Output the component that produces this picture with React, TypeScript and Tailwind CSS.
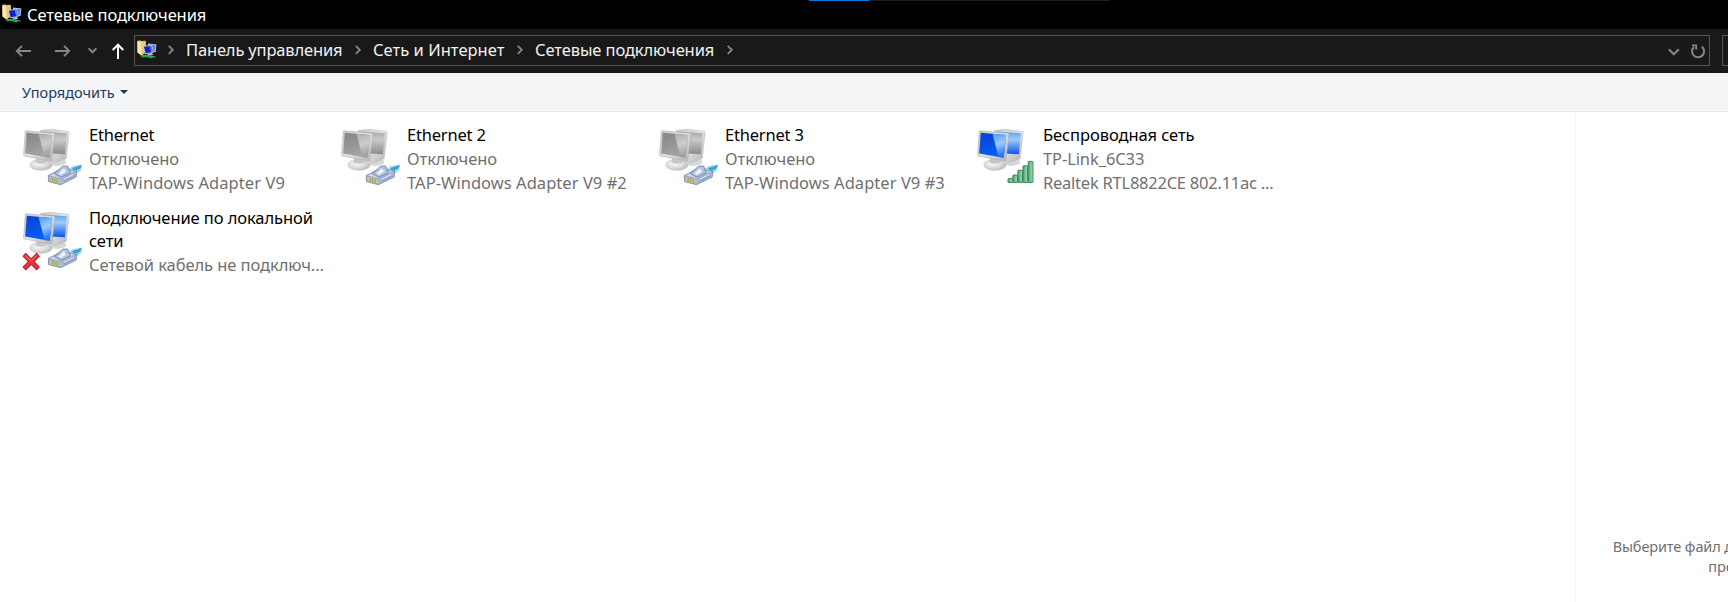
import React from 'react';

type IconKind = 'disabled' | 'wifi' | 'unplugged';

function MonitorsIcon({ kind }: { kind: IconKind }) {
  const off = kind === 'disabled';
  const id = (n: string) => `${n}-${kind}`;
  const ref = (n: string) => `url(#${id(n)})`;
  return (
    <svg viewBox="0 0 75 75" className="h-[75px] w-[75px] shrink-0">
      <defs>
        <linearGradient id={id('front')} x1="0" y1="0" x2="0.3" y2="1">
          <stop offset="0" stopColor={off ? '#858585' : '#0a3fd0'} />
          <stop offset="1" stopColor={off ? '#a3a3a3' : '#0560f5'} />
        </linearGradient>
        <linearGradient id={id('glare')} x1="0" y1="0" x2="0.2" y2="1">
          <stop offset="0" stopColor={off ? '#aeaeae' : '#4f9cf4'} />
          <stop offset="0.5" stopColor={off ? '#cdcdcd' : '#9ccafb'} />
          <stop offset="1" stopColor={off ? '#9f9f9f' : '#1f74f8'} />
        </linearGradient>
        <linearGradient id={id('back')} x1="0" y1="0" x2="0" y2="1">
          <stop offset="0" stopColor={off ? '#a8a8a8' : '#5aa2f0'} />
          <stop offset="0.35" stopColor={off ? '#cacaca' : '#9dccfa'} />
          <stop offset="1" stopColor={off ? '#8a8a8a' : '#0a55ea'} />
        </linearGradient>
        <linearGradient id={id('frame')} x1="0" y1="0" x2="1" y2="1">
          <stop offset="0" stopColor="#c6c8c8" />
          <stop offset="0.5" stopColor="#e4e4e4" />
          <stop offset="1" stopColor="#b0b0b0" />
        </linearGradient>
        <radialGradient id={id('base')} cx="0.4" cy="0.4" r="0.65">
          <stop offset="0" stopColor="#fafafa" />
          <stop offset="0.6" stopColor="#d9d9d9" />
          <stop offset="1" stopColor="#b8b8b8" />
        </radialGradient>
        <linearGradient id={id('bar')} x1="0" y1="0" x2="1" y2="0">
          <stop offset="0" stopColor="#4fa577" />
          <stop offset="1" stopColor="#a5dcb6" />
        </linearGradient>
      </defs>

      <path d="M36 40 L48 38 Q54 42 49 44.5 Q43 47 37 45 Z" fill="#d8d8d8" />
      <path d="M25 10.6 L36 9.3 L53.3 11.4 Q54.2 11.6 54.1 12.4 L51.2 38.6 L40 43 L36 41 Z" fill={ref('frame')} stroke="#bdbdbd" strokeWidth="0.6" />
      <path d="M28 11.6 L51.9 13.2 L49.9 34.2 L36 33.4 Z" fill={ref('back')} />

      <ellipse cx="26" cy="44.8" rx="11.4" ry="5.6" fill={ref('base')} stroke="#c4c4c4" strokeWidth="0.4" />
      <path d="M21 38 L31 39.5 L31.5 42.6 Q26 45 20.5 42.4 Z" fill="#c6c6c6" />
      <path d="M11.4 10.8 L38.8 13.2 Q40 13.4 39.9 14.6 L36.9 40 Q36.7 41.3 35.5 41 L9.3 35.9 Q8.4 35.6 8.6 34.6 L10.3 11.6 Q10.5 10.7 11.4 10.8 Z" fill={ref('frame')} stroke="#adb0b0" strokeWidth="0.6" />
      <path d="M11.8 12.7 L37.4 15 L34.6 37.7 L10.1 33.6 Z" fill={ref('front')} />
      <path d="M23.5 13.8 L37.4 15 L34.6 37.7 L29.5 36.9 Z" fill={ref('glare')} />

      {kind === 'wifi' ? (
        <g fill={ref('bar')} stroke="#2d7f50" strokeWidth="0.9">
          <rect x="39" y="58.6" width="4.6" height="3.9" rx="0.6" />
          <rect x="43.9" y="55" width="4.6" height="7.5" rx="0.6" />
          <rect x="48.9" y="50.2" width="4.7" height="12.3" rx="0.6" />
          <rect x="54" y="45.8" width="4.7" height="16.7" rx="0.6" />
          <rect x="59.2" y="41.4" width="4.8" height="21.1" rx="0.6" />
        </g>
      ) : (
        <g strokeLinejoin="round">
          <path d="M53 49.5 L58 46 L67.3 44.6 L65.8 50.6 L61.5 53.8 Z" fill="#9fd7ec" />
          <path d="M57 48.2 L66.8 44.9 L65.4 48.4 L59.5 51 Z" fill="#35a3d4" />
          <path d="M33.3 55.6 L45 49.4 L61.6 51 L61.2 57 L45.5 64.7 L33.6 61.6 Z" fill="#a9bad8" stroke="#7082a8" strokeWidth="0.8" />
          <path d="M33.8 55.8 L45 49.4 L61.6 51 L46 58.6 Z" fill="#cbd8ec" stroke="#8595b8" strokeWidth="0.6" />
          <path d="M39.5 53.6 L47.6 46.2 L52.6 46 L55.4 52.8 L46 57.2 Z" fill="#b4c4e0" stroke="#61749c" strokeWidth="0.8" />
          <path d="M43.2 53.8 L49 48.2 L51 51.8 L46 54.8 Z" fill="#eef3fa" />
          <path d="M34.7 57.2 L44.3 59.6 L44 63.2 L34.9 60.9 Z" fill="#d0c978" />
          <path d="M37.2 57.8 V61.4 M39.7 58.5 V62.1 M42.2 59.2 V62.7" stroke="#7d7c54" strokeWidth="0.7" />
          <path d="M48.5 61 L59.5 55.4" stroke="#8b9dc2" strokeWidth="1.6" />
          <path d="M49 59.4 L58.5 54.6" stroke="#eef3fa" strokeWidth="0.9" />
        </g>
      )}

      {kind === 'unplugged' && (
        <g strokeLinecap="square">
          <path d="M10.8 53.2 L21.6 64 M21.6 53.2 L10.8 64" stroke="#b3161f" strokeWidth="4.8" />
          <path d="M10.8 53.2 L21.6 64 M21.6 53.2 L10.8 64" stroke="#e5343c" strokeWidth="3.3" />
          <path d="M10.9 52.9 L15.5 57.4 M21.4 52.9 L17.4 57" stroke="#f37a7c" strokeWidth="1" />
        </g>
      )}
    </svg>
  );
}

function FolderNetIcon() {
  return (
    <svg viewBox="0 0 20 20" className="h-5 w-5 shrink-0">
      <path d="M0.2 1 L3 0.2 L4 1 L8.6 0.8 L9 12 L4.8 15.6 L0.4 12.6 Z" fill="#e2bd66" />
      <path d="M0.4 1.2 L4.6 2.6 V15.4 L0.6 12.4 Z" fill="#f8e6a8" />
      <path d="M4.6 2.6 L8.8 1.6 V12 L4.6 15.2 Z" fill="#e7c878" />
      <path d="M11 3.6 L19.4 4.6 L18.6 12 L11 11.6 Z" fill="#c3cce2" />
      <path d="M12 4.4 L18.5 5.3 L17.8 11 L12 10.6 Z" fill="#5f80dc" />
      <path d="M6 6 L15 4.8 L16.6 12.8 L8 14.2 Z" fill="#b7c4e8" />
      <path d="M7 6.8 L14.3 5.8 L15.7 12 L8.6 13.2 Z" fill="#101fc4" />
      <path d="M12.4 6.1 L14.3 5.8 L15.7 12 L14.2 12.3 Z" fill="#5f80ec" />
      <path d="M10.5 13.6 L15 12.9 L16.4 15 L11 15.8 Z" fill="#b4bac6" />
      <path d="M3.6 16 L9 15.3 L18.6 17.2" fill="none" stroke="#8e9898" strokeWidth="1" />
      <path d="M5 16.6 L9.5 16 L15.6 17.6" fill="none" stroke="#12b24b" strokeWidth="1.9" />
    </svg>
  );
}

function Chevron({ className }: { className: string }) {
  return (
    <svg viewBox="0 0 6 10" className={`h-[10px] w-[6px] shrink-0 ${className}`} fill="none" stroke="#868686" strokeWidth="1.9">
      <path d="M0.8 0.9 L4.8 4.9 L0.8 8.9" />
    </svg>
  );
}

interface Line {
  text: string;
  spacing: string;
  strong?: boolean;
}

interface Connection {
  icon: IconKind;
  lines: Line[];
}

const connections: Connection[] = [
  {
    icon: 'disabled',
    lines: [
      { text: 'Ethernet', spacing: 'tracking-[-0.2px]', strong: true },
      { text: 'Отключено', spacing: 'tracking-[-0.04px]' },
      { text: 'TAP-Windows Adapter V9', spacing: 'tracking-[0.07px]' },
    ],
  },
  {
    icon: 'disabled',
    lines: [
      { text: 'Ethernet 2', spacing: 'tracking-[-0.2px]', strong: true },
      { text: 'Отключено', spacing: 'tracking-[-0.04px]' },
      { text: 'TAP-Windows Adapter V9 #2', spacing: 'tracking-[0.04px]' },
    ],
  },
  {
    icon: 'disabled',
    lines: [
      { text: 'Ethernet 3', spacing: 'tracking-[-0.2px]', strong: true },
      { text: 'Отключено', spacing: 'tracking-[-0.04px]' },
      { text: 'TAP-Windows Adapter V9 #3', spacing: 'tracking-[0.04px]' },
    ],
  },
  {
    icon: 'wifi',
    lines: [
      { text: 'Беспроводная сеть', spacing: 'tracking-[-0.08px]', strong: true },
      { text: 'TP-Link_6C33', spacing: 'tracking-[-0.1px]' },
      { text: 'Realtek RTL8822CE 802.11ac ...', spacing: 'tracking-[-0.24px]' },
    ],
  },
  {
    icon: 'unplugged',
    lines: [
      { text: 'Подключение по локальной', spacing: 'tracking-[-0.08px]', strong: true },
      { text: 'сети', spacing: '-mt-px tracking-[-0.1px]', strong: true },
      { text: 'Сетевой кабель не подключ...', spacing: 'tracking-[-0.07px]' },
    ],
  },
];

export default function App() {
  return (
    <div className="flex h-[602px] w-full flex-col overflow-hidden whitespace-nowrap bg-white font-['Noto_Sans','Open_Sans',sans-serif] text-[16.5px]">
      <header className="relative flex h-[29px] shrink-0 items-start bg-black pl-[2px] text-white">
        <div className="pt-1">
          <FolderNetIcon />
        </div>
        <h1 className="ml-[5px] mt-[3px] leading-6 tracking-[-0.1px]">Сетевые подключения</h1>
        <div className="absolute left-[809px] top-0 flex h-px w-[301px] bg-[#1f1f1f]">
          <div className="h-px w-[60px] bg-[#0078d7]" />
        </div>
      </header>

      <nav className="flex h-11 shrink-0 items-start bg-[#191919] pt-[6px] text-[#f2f2f2]">
        <svg viewBox="0 0 134 31" className="h-[31px] w-[134px] shrink-0" fill="none">
          <path d="M31 16 H16.5 M22 10.8 L16.8 16 L22 21.2" stroke="#868686" strokeWidth="1.9" />
          <path d="M55 16 H69.5 M64 10.8 L69.2 16 L64 21.2" stroke="#868686" strokeWidth="1.9" />
          <path d="M88.6 13.4 L92.5 17.3 L96.4 13.4" stroke="#868686" strokeWidth="2" />
          <path d="M118 24 V9.5 M112.7 15 L118 9.7 L123.3 15" stroke="#ffffff" strokeWidth="2" />
        </svg>
        <div className="flex h-[31px] w-[1576px] shrink-0 items-start border border-[#535353]">
          <div className="ml-[2px] mt-1">
            <FolderNetIcon />
          </div>
          <Chevron className="ml-[11px] mt-[9px]" />
          <span className="ml-3 mt-[2px] w-[169px] leading-6 tracking-[-0.16px]">Панель управления</span>
          <Chevron className="mt-[9px]" />
          <span className="ml-3 mt-[2px] w-[144px] leading-6 tracking-[0.03px]">Сеть и Интернет</span>
          <Chevron className="mt-[9px]" />
          <span className="ml-3 mt-[2px] w-[192px] leading-6 tracking-[-0.1px]">Сетевые подключения</span>
          <Chevron className="mt-[9px]" />
          <svg viewBox="0 0 42 29" className="ml-auto h-[29px] w-[42px]" fill="none" stroke="#868686">
            <path d="M1.8 13.2 L6.8 18.2 L11.8 13.2" strokeWidth="2.1" />
            <path d="M18.5 0 V29" stroke="#121212" />
            <path d="M34.8 10.6 A6 6 0 1 1 27 10.9" strokeWidth="2" />
            <path d="M25 9.4 H29.2 V13.6" strokeWidth="1.8" />
          </svg>
        </div>
        <div className="ml-3 h-[31px] w-[300px] shrink-0 border border-[#535353]" />
      </nav>

      <div className="flex h-[39px] shrink-0 items-center border-b border-[#e6e8ea] bg-[#f4f5f7] pl-[22px] text-[14.5px] text-[#1e395b]">
        <span className="leading-6">Упорядочить</span>
        <svg viewBox="0 0 8 4" className="ml-[5px] h-1 w-2">
          <path d="M0 0 H8 L4 4 Z" fill="#1e395b" />
        </svg>
      </div>

      <div className="flex min-h-0 flex-1">
        <main className="flex w-[1575px] shrink-0 flex-wrap content-start items-start pl-[15px] pr-[200px] pt-2">
          {connections.map((c) => (
            <div key={c.lines[0].text} className="flex h-[83px] w-[318px] items-start">
              <MonitorsIcon kind={c.icon} />
              <div className="-ml-px pt-[3px]">
                {c.lines.map((l) => (
                  <div key={l.text} className={`leading-6 ${l.spacing} ${l.strong ? 'text-black' : 'text-[#707070]'}`}>
                    {l.text}
                  </div>
                ))}
              </div>
            </div>
          ))}
        </main>
        <aside className="w-[345px] shrink-0 border-l border-[#f2f3f5] pt-[424px] text-center text-[14.5px] leading-5 tracking-[-0.12px] text-[#707070]">
          <p>Выберите файл для предварительного</p>
          <p>просмотра.</p>
        </aside>
      </div>
    </div>
  );
}
